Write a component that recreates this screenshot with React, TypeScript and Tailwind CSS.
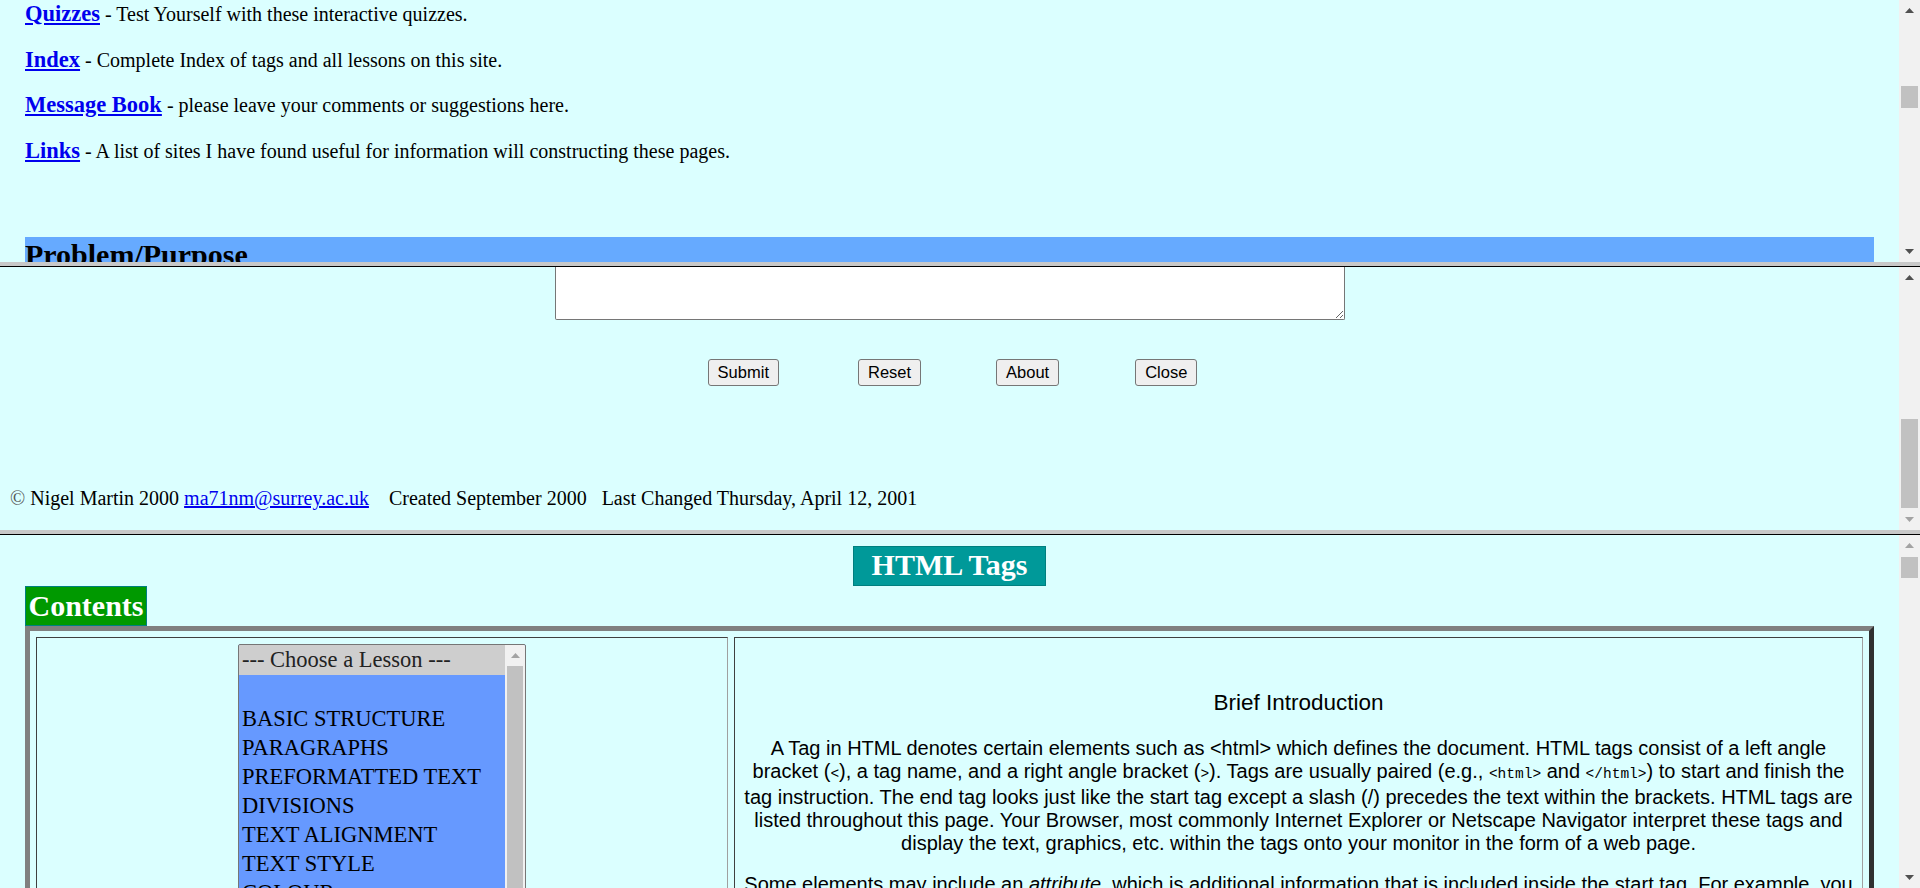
import React from "react";

type ScrollProps = {
  before: string;
  thumb: string;
  upDim?: boolean;
  downDim?: boolean;
};

function Arrow({ up, dim }: { up?: boolean; dim?: boolean }) {
  return (
    <div className="flex h-[21px] shrink-0 items-center justify-center">
      <svg width="9" height="5" viewBox="0 0 9 5">
        <polygon
          points={up ? "0,5 9,5 4.5,0" : "0,0 9,0 4.5,5"}
          fill={dim ? "#a3a3a3" : "#505050"}
        />
      </svg>
    </div>
  );
}

function Scrollbar({ before, thumb, upDim, downDim }: ScrollProps) {
  return (
    <div className="flex w-[21px] shrink-0 flex-col bg-[#f1f1f1]">
      <Arrow up dim={upDim} />
      <div className={`shrink-0 ${before}`} />
      <div className={`mx-[2px] shrink-0 bg-[#c1c1c1] ${thumb}`} />
      <div className="flex-1" />
      <Arrow dim={downDim} />
    </div>
  );
}

const navRows = [
  ["Quizzes", " - Test Yourself with these interactive quizzes."],
  ["Index", " - Complete Index of tags and all lessons on this site."],
  ["Message Book", " - please leave your comments or suggestions here."],
  ["Links", " - A list of sites I have found useful for information will constructing these pages."],
];

const lessons = [
  "",
  "BASIC STRUCTURE",
  "PARAGRAPHS",
  "PREFORMATTED TEXT",
  "DIVISIONS",
  "TEXT ALIGNMENT",
  "TEXT STYLE",
  "COLOUR",
  "LISTS",
];

function Code({ children }: { children: React.ReactNode }) {
  return <code className="font-['Liberation_Mono',monospace] text-[14.5px]">{children}</code>;
}

function Btn({ label, className = "" }: { label: string; className?: string }) {
  return (
    <button
      className={`h-[27px] rounded-[3px] border border-[#767676] bg-[#efefef] px-[9px] font-['Liberation_Sans',Arial,sans-serif] text-[16.5px] leading-[19px] text-black ${className}`}
    >
      {label}
    </button>
  );
}

export default function App() {
  return (
    <div className="flex h-[888px] w-full flex-col overflow-hidden bg-[#dbffff] font-['Liberation_Serif',serif] text-black">
      {/* top frame */}
      <div className="flex h-[262px] shrink-0 overflow-hidden">
        <div className="min-w-0 flex-1 overflow-hidden px-[25px] pt-[1px]">
          {navRows.map(([link, text]) => (
            <p key={link} className="h-[45.7px] text-[20px] leading-[26px]">
              <a href="#" className="text-[22.5px] font-bold text-[#0000ee] underline">
                {link}
              </a>
              {text}
            </p>
          ))}
          <h2 className="mt-[53.2px] h-[35px] bg-[#66aaff] text-[30px] font-bold leading-[35px]">
            Problem/Purpose
          </h2>
        </div>
        <Scrollbar before="h-[65px]" thumb="h-[22px]" />
      </div>

      <div className="h-[5px] shrink-0 border-b border-black bg-[#c8c8c8]" />

      {/* middle frame */}
      <div className="flex h-[263px] shrink-0 overflow-hidden">
        <div className="min-w-0 flex-1 overflow-hidden px-[10px]">
          <div className="flex justify-center">
            <textarea
              readOnly
              className="h-[53px] w-[790px] resize rounded-b-[2px] border border-t-0 border-[#767676] bg-white"
            />
          </div>
          <div className="mt-[39px] flex justify-center gap-[75px] pl-[6px]">
            <Btn label="Submit" className="mr-[4px]" />
            <Btn label="Reset" />
            <Btn label="About" className="mr-[1px]" />
            <Btn label="Close" />
          </div>
          <p className="mt-[101px] whitespace-pre text-[20px] leading-[23px]">
            <span className="text-[#555]">©</span> Nigel Martin 2000{" "}
            <a href="#" className="text-[#0000ee] underline">
              ma71nm@surrey.ac.uk
            </a>
            {"\u00a0\u00a0\u00a0 Created September 2000\u00a0\u00a0 Last Changed Thursday, April 12, 2001"}
          </p>
        </div>
        <Scrollbar before="h-[131px]" thumb="h-[89px]" downDim />
      </div>

      <div className="h-[5px] shrink-0 border-b border-black bg-[#c8c8c8]" />

      {/* bottom frame */}
      <div className="flex min-h-0 flex-1 overflow-hidden">
        <div className="min-w-0 flex-1 overflow-hidden pt-[11px]">
          <div className="flex justify-center">
            <div className="h-[40px] w-[193px] border border-[#007f7f] bg-[#009999] text-center text-[30px] font-bold leading-[36px] text-white">
              HTML Tags
            </div>
          </div>
          <div className="ml-[25px] h-[40px] w-[122px] border border-[#008080] bg-[#009900] text-center text-[30px] font-bold leading-[38px] text-white">
            Contents
          </div>
          <div className="mx-[25px] flex gap-[6px] border-[5px] border-t-[#808080] border-r-[#303030] border-b-[#303030] border-l-[#808080] p-[6px]">
            {/* left cell */}
            <div className="flex h-[400px] w-[692px] shrink-0 justify-center border border-t-[#404040] border-r-[#a0a0a0] border-b-[#a0a0a0] border-l-[#404040] pt-[6px]">
              <div className="flex h-[400px] w-[288px] overflow-hidden rounded-[2px] border border-[#767676] bg-[#6699ff]">
                <div className="min-w-0 flex-1 text-[22.5px] leading-[29px]">
                  <div className="h-[30px] bg-[#cecece] px-[3px] text-[#222]">--- Choose a Lesson ---</div>
                  {lessons.map((l, i) => (
                    <div key={i} className="h-[29px] px-[3px]">
                      {l}
                    </div>
                  ))}
                </div>
                <div className="flex w-[20px] shrink-0 flex-col bg-[#f1f1f1]">
                  <Arrow up dim />
                  <div className="mx-[2px] flex-1 bg-[#c1c1c1]" />
                </div>
              </div>
            </div>
            {/* right cell */}
            <div className="min-w-0 flex-1 border border-t-[#404040] border-r-[#a0a0a0] border-b-[#a0a0a0] border-l-[#404040] px-[9px] text-center font-['Liberation_Sans',Arial,sans-serif]">
              <p className="mt-[52px] text-[22.5px] leading-[26px]">Brief Introduction</p>
              <p className="mt-[21px] text-[20px] leading-[23px]">
                A Tag in HTML denotes certain elements such as &lt;html&gt; which defines the document. HTML
                tags consist of a left angle bracket (<Code>&lt;</Code>), a tag name, and a right angle bracket
                (<Code>&gt;</Code>). Tags are usually paired (e.g., <Code>&lt;html&gt;</Code> and{" "}
                <Code>&lt;/html&gt;</Code>) to start and finish the tag instruction. The end tag looks just like
                the start tag except a slash (/) precedes the text within the brackets. HTML tags are listed
                throughout this page. Your Browser, most commonly Internet Explorer or Netscape Navigator
                interpret these tags and display the text, graphics, etc. within the tags onto your monitor in
                the form of a web page.
              </p>
              <p className="mt-[18px] text-[20px] leading-[23px]">
                Some elements may include an <i>attribute</i>, which is additional information that is included
                inside the start tag. For example, you can specify the alignment of images (top, middle, or
                bottom) by including the appropriate attribute with the image source HTML code.
              </p>
            </div>
          </div>
        </div>
        <Scrollbar before="h-[1px]" thumb="h-[21px]" upDim />
      </div>
    </div>
  );
}
